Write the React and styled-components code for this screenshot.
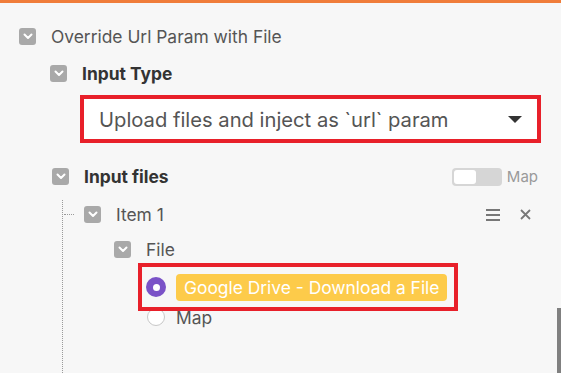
import React from "react";
import styled, { createGlobalStyle } from "styled-components";

const Global = createGlobalStyle`
  html, body { margin: 0; padding: 0; background: #f7f7f7; }
  body { font-family: Inter, "Noto Sans", sans-serif; overflow: hidden; }
`;

const Page = styled.div`
  position: relative;
  width: 561px;
  height: 373px;
  overflow: hidden;
  background: #f7f7f7;
`;

const TopBar = styled.div`
  height: 3px;
  background: #f07d3a;
`;

const Body = styled.div`
  padding: 22px 0 0 19px;
`;

const Row = styled.div`
  display: flex;
  align-items: center;
  height: 23px;
  gap: ${(p) => p.$gap || 15}px;
  margin-top: ${(p) => p.$mt || 0}px;
  padding-right: ${(p) => p.$pr || 0}px;
`;

const Label = styled.span`
  font-size: 17.4px;
  color: ${(p) => (p.$bold ? "#333" : "#555")};
  font-weight: ${(p) => (p.$bold ? 700 : 400)};
  white-space: nowrap;
`;

const Spacer = styled.div`
  flex: 1;
`;

const Box = styled.span`
  width: 17px;
  height: 17px;
  border-radius: 3px;
  background: #a9a9a9;
  display: inline-flex;
  align-items: center;
  justify-content: center;
  flex: none;
`;

const Chevron = () => (
  <Box>
    <svg width="10" height="7" viewBox="0 0 10 7">
      <path d="M1.5 1.5 L5 5 L8.5 1.5" fill="none" stroke="#fff" strokeWidth="2" strokeLinecap="round" strokeLinejoin="round" />
    </svg>
  </Box>
);

const Indent = styled.div`
  margin-left: ${(p) => p.$ml}px;
`;

const Select = styled.div`
  margin: 14px 24px 0 65px;
  height: 40px;
  background: #fff;
  outline: 4px solid #e8202a;
  display: flex;
  align-items: center;
  padding: 0 15px 0 15px;
  justify-content: space-between;
`;

const SelectText = styled.span`
  font-size: 20.2px;
  color: #555;
  white-space: nowrap;
`;

const Caret = styled.span`
  width: 0;
  height: 0;
  border-left: 7px solid transparent;
  border-right: 7px solid transparent;
  border-top: 7px solid #333;
`;

const Toggle = styled.span`
  width: 50px;
  height: 18px;
  border-radius: 4px;
  background: #d6d6d6;
  position: relative;
  display: inline-block;
`;

const Knob = styled.span`
  position: absolute;
  left: 2px;
  top: 2px;
  width: 22px;
  height: 14px;
  border-radius: 3px;
  background: #fff;
`;

const MapLabel = styled.span`
  font-size: 15px;
  color: #9a9a9a;
`;

const Tree = styled.div`
  margin: 12px 0 0 43px;
  border-left: 1px dotted #9a9a9a;
  height: 200px;
  padding-top: 3px;
`;

const ItemRow = styled(Row)`
  position: relative;
  padding-left: 21px;
  &::before {
    content: "";
    position: absolute;
    left: 1px;
    top: 11px;
    width: 10px;
    border-top: 1px dotted #9a9a9a;
  }
`;

const IconBtn = styled.span`
  display: inline-flex;
  align-items: center;
  justify-content: center;
  color: #777;
`;

const Highlight = styled.div`
  margin: 6px 0 0 79px;
  width: 308px;
  height: 40px;
  outline: 4px solid #e8202a;
  display: flex;
  align-items: center;
  gap: 10px;
  padding-left: 4px;
`;

const Radio = styled.span`
  width: ${(p) => (p.$on ? 20 : 18)}px;
  height: ${(p) => (p.$on ? 20 : 18)}px;
  border-radius: 50%;
  box-sizing: border-box;
  background: ${(p) => (p.$on ? "#7a52c7" : "#fff")};
  border: ${(p) => (p.$on ? "none" : "1px solid #c8c8c8")};
  display: inline-flex;
  align-items: center;
  justify-content: center;
  flex: none;
  &::after {
    content: "";
    display: ${(p) => (p.$on ? "block" : "none")};
    width: 7px;
    height: 7px;
    border-radius: 50%;
    background: #fff;
  }
`;

const Pill = styled.span`
  background: #fdcb4a;
  color: #fff;
  font-size: 17.4px;
  border-radius: 4px;
  height: 27px;
  display: inline-flex;
  align-items: center;
  padding: 0 8px;
  white-space: nowrap;
`;

const RadioRow = styled.div`
  margin: 0 0 0 84px;
  display: flex;
  align-items: center;
  gap: 11px;
  height: 20px;
`;

const Scroll = styled.div`
  position: absolute;
  right: 0;
  top: 308px;
  width: 4px;
  bottom: 0;
  background: #808080;
`;

export default function App() {
  return (
    <Page>
      <Global />
      <TopBar />
      <Body>
        <Row>
          <Chevron />
          <Label>Override Url Param with File</Label>
        </Row>
        <Indent $ml={31}>
          <Row $mt={14}>
            <Chevron />
            <Label $bold>Input Type</Label>
          </Row>
        </Indent>
        <Select>
          <SelectText>Upload files and inject as `url` param</SelectText>
          <Caret />
        </Select>
        <Indent $ml={33}>
          <Row $mt={26} $pr={23}>
            <Chevron />
            <Label $bold>Input files</Label>
            <Spacer />
            <Row $gap={5}>
              <Toggle>
                <Knob />
              </Toggle>
              <MapLabel>Map</MapLabel>
            </Row>
          </Row>
        </Indent>
        <Tree>
          <ItemRow $pr={30}>
            <Chevron />
            <Label>Item 1</Label>
            <Spacer />
            <Row $gap={20}>
              <IconBtn>
                <svg width="14" height="12" viewBox="0 0 14 12">
                  <path d="M0 1h14M0 6h14M0 11h14" stroke="#777" strokeWidth="2" />
                </svg>
              </IconBtn>
              <IconBtn>
                <svg width="11" height="11" viewBox="0 0 11 11">
                  <path d="M1 1l9 9M10 1l-9 9" stroke="#777" strokeWidth="1.8" />
                </svg>
              </IconBtn>
            </Row>
          </ItemRow>
          <Indent $ml={51}>
            <Row $mt={12}>
              <Chevron />
              <Label>File</Label>
            </Row>
          </Indent>
          <Highlight>
            <Radio $on />
            <Pill>Google Drive - Download a File</Pill>
          </Highlight>
          <RadioRow>
            <Radio />
            <Label>Map</Label>
          </RadioRow>
        </Tree>
      </Body>
      <Scroll />
    </Page>
  );
}
